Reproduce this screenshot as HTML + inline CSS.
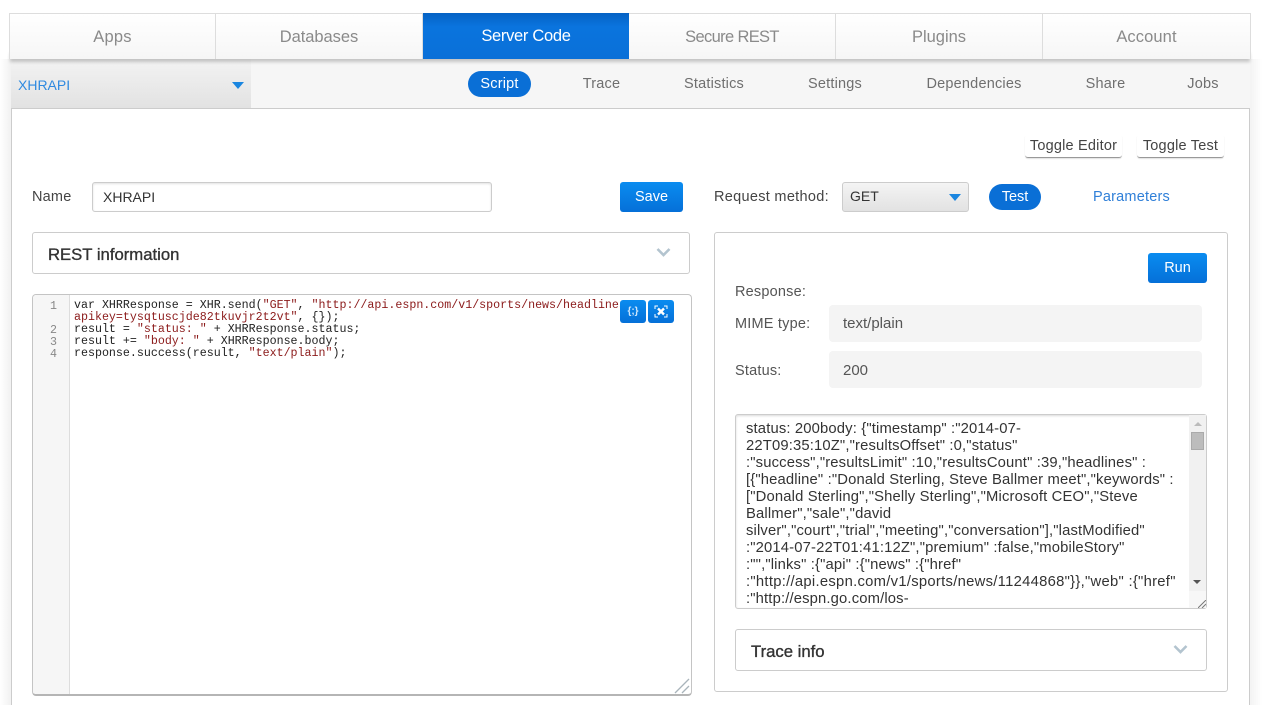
<!DOCTYPE html>
<html><head><meta charset="utf-8">
<style>
html,body{margin:0;padding:0;width:1262px;height:705px;overflow:hidden;background:#fff;font-family:"Liberation Sans",sans-serif;color:#444}
.a{position:absolute;box-sizing:border-box;white-space:pre}
.t{position:absolute;white-space:pre;line-height:20px;height:20px;transform:translateX(-50%)}
.l{position:absolute;white-space:pre;line-height:20px;height:20px}
.tab{position:absolute;top:13px;height:46px;line-height:46px;text-align:center;font-size:16.5px;color:#8a8a8a;background:linear-gradient(#fff,#f6f6f6);border-right:1px solid #ddd;box-sizing:border-box}
.btn{position:absolute;background:linear-gradient(#0a8cf0,#0570d8);color:#fff;border-radius:3px;text-align:center;font-size:14.5px}
.sub{color:#6f6f6f;font-size:14.5px;letter-spacing:.2px;top:74px}
.code{position:absolute;left:74px;font:11.65px/12px "Liberation Mono",monospace;color:#222;white-space:pre}
.code b{font-weight:normal;color:#8b1a1a}
.num{position:absolute;width:24px;left:33px;text-align:right;font:11.65px/12px "Liberation Mono",monospace;color:#888}
.r{position:absolute;left:746px;font-size:14.8px;line-height:17px;color:#333;white-space:pre;letter-spacing:.15px}
.box{position:absolute;background:#f4f4f4;border-radius:4px;left:829px;width:373px;height:37px;line-height:38px;padding-left:14px;box-sizing:border-box;font-size:15px;color:#555}
.lb{font-size:14.5px;letter-spacing:.2px;color:#555}
.tg{height:24px;line-height:24px;text-align:center;font-size:14.5px;color:#444;letter-spacing:.2px;border-bottom:1px solid #999;border-radius:3px;box-shadow:0 1px 1px rgba(0,0,0,.12)}
</style></head><body>
<!-- page frame -->
<div class="a" style="left:0;top:59px;width:11px;height:646px;background:linear-gradient(90deg,#fff,#f1f1f1)"></div>
<div class="a" style="left:1250px;top:59px;width:12px;height:646px;background:linear-gradient(90deg,#f3f3f3,#fff)"></div>
<div class="a" style="left:11px;top:59px;width:1239px;height:646px;background:#fff;border-left:1px solid #ccc;border-right:1px solid #ccc"></div>
<!-- sub nav -->
<div class="a" style="left:11px;top:59px;width:1239px;height:50px;background:#f6f6f6;border-bottom:1px solid #ccc"></div>
<div class="a" style="left:11px;top:59px;width:240px;height:49px;background:linear-gradient(#f3f3f3,#e2e2e2)"></div>
<div class="l" style="left:18px;top:75px;font-size:14px;color:#2f8ae0;">XHRAPI</div>
<div class="a" style="left:232px;top:82px;width:0;height:0;border-left:6px solid transparent;border-right:6px solid transparent;border-top:7px solid #1a86e0"></div>
<div class="a" style="left:468px;top:71px;width:63px;height:26px;border-radius:13px;background:#0a6fd6"></div>
<div class="t sub" style="left:499.5px;color:#fff">Script</div>
<div class="t sub" style="left:601.5px">Trace</div>
<div class="t sub" style="left:714px">Statistics</div>
<div class="t sub" style="left:835px">Settings</div>
<div class="t sub" style="left:974px">Dependencies</div>
<div class="t sub" style="left:1105.5px">Share</div>
<div class="t sub" style="left:1203px">Jobs</div>
<!-- top tabs -->
<div class="a" style="left:10px;top:50px;width:1240px;height:9px;box-shadow:0 3px 3px rgba(0,0,0,.2)"></div>
<div class="tab" style="left:9px;width:207px;border-left:1px solid #ddd;border-top:1px solid #ddd;letter-spacing:.2px">Apps</div>
<div class="tab" style="left:216px;width:207px;border-top:1px solid #ddd;letter-spacing:-.05px">Databases</div>
<div class="tab" style="left:423px;width:206px;color:#fff;background:linear-gradient(#0562c4,#0a74de 30%,#0a70d8);border-right:0;letter-spacing:-.3px">Server Code</div>
<div class="tab" style="left:629px;width:207px;border-top:1px solid #ddd;letter-spacing:-.65px">Secure REST</div>
<div class="tab" style="left:836px;width:207px;border-top:1px solid #ddd;letter-spacing:0">Plugins</div>
<div class="tab" style="left:1043px;width:208px;border-top:1px solid #ddd;border-right:1px solid #ddd;letter-spacing:.1px">Account</div>
<!-- toggles -->
<div class="a tg" style="left:1025px;top:134px;width:97px">Toggle Editor</div>
<div class="a tg" style="left:1137px;top:134px;width:87px">Toggle Test</div>
<!-- name row -->
<div class="l" style="left:32px;top:187px;font-size:14.5px;letter-spacing:.2px">Name</div>
<div class="a" style="left:92px;top:182px;width:400px;height:30px;border:1px solid #ccc;border-radius:3px;line-height:29px;padding-left:10px;font-size:14px;color:#333;box-shadow:inset 0 1px 2px rgba(0,0,0,.12)">XHRAPI</div>
<div class="btn" style="left:620px;top:182px;width:63px;height:30px;line-height:30px">Save</div>
<div class="l" style="left:714px;top:187px;font-size:14.5px;letter-spacing:.3px">Request method:</div>
<div class="a" style="left:842px;top:182px;width:127px;height:30px;border:1px solid #ccc;border-radius:3px;background:linear-gradient(#f4f4f4,#e2e2e2);line-height:27px;padding-left:7px;font-size:14px;color:#333">GET</div>
<div class="a" style="left:949px;top:194px;width:0;height:0;border-left:6px solid transparent;border-right:6px solid transparent;border-top:7px solid #1a86e0"></div>
<div class="a" style="left:989px;top:184px;width:52px;height:26px;border-radius:13px;background:#0a6fd6;color:#fff;text-align:center;line-height:26px;font-size:14.5px">Test</div>
<div class="l" style="left:1093px;top:187px;font-size:14.5px;color:#2f7fd8;letter-spacing:.2px">Parameters</div>
<!-- REST info -->
<div class="a" style="left:32px;top:232px;width:658px;height:42px;border:1px solid #ccc;border-radius:3px"></div>
<div class="l" style="left:48px;top:245px;font-size:16.7px;color:#333;-webkit-text-stroke:.35px #333">REST information</div>
<svg class="a" style="left:656px;top:247px" width="15" height="11" viewBox="0 0 15 11"><path d="M1.5 2 L7.5 8 L13.5 2" fill="none" stroke="#b3c4cf" stroke-width="2.6"/></svg>
<!-- editor -->
<div class="a" style="left:32px;top:294px;width:660px;height:402px;border:1px solid #c4c4c4;border-bottom:2px solid #b5b5b5;border-radius:4px;background:#fff"></div>
<div class="a" style="left:33px;top:295px;width:37px;height:399px;background:#f6f6f6;border-right:1px solid #ddd;border-radius:3px 0 0 3px"></div>
<div class="num" style="top:301px">1</div>
<div class="num" style="top:325px">2</div>
<div class="num" style="top:337px">3</div>
<div class="num" style="top:349px">4</div>
<div class="code" style="top:300px">var XHRResponse = XHR.send(<b>"GET"</b>, <b>"http://api.espn.com/v1/sports/news/headlines</b></div>
<div class="code" style="top:312px"><b>apikey=tysqtuscjde82tkuvjr2t2vt"</b>, {});</div>
<div class="code" style="top:324px">result = <b>"status: "</b> + XHRResponse.status;</div>
<div class="code" style="top:336px">result += <b>"body: "</b> + XHRResponse.body;</div>
<div class="code" style="top:348px">response.success(result, <b>"text/plain"</b>);</div>
<div class="btn" style="left:620px;top:300px;width:26px;height:23px;line-height:23px;font-size:10px;font-weight:bold;color:#cfe6fb">{;}</div>
<div class="btn" style="left:648px;top:300px;width:26px;height:23px"></div>
<svg class="a" style="left:654px;top:305px" width="14" height="13" viewBox="0 0 14 13"><path d="M1 4V1H4M10 1H13V4M13 9V12H10M4 12H1V9" fill="none" stroke="#fff" stroke-width="1"/><path d="M4 3.5L10 9.5M10 3.5L4 9.5" stroke="#fff" stroke-width="2.4"/></svg>
<svg class="a" style="left:674px;top:678px" width="16" height="16" viewBox="0 0 16 16"><path d="M1 15L15 1M8 15L15 8" stroke="#a9b4bb" stroke-width="1.3" fill="none"/></svg>
<!-- right panel -->
<div class="a" style="left:714px;top:232px;width:514px;height:460px;border:1px solid #ccc;border-radius:3px"></div>
<div class="btn" style="left:1148px;top:253px;width:59px;height:30px;line-height:30px">Run</div>
<div class="l lb" style="left:735px;top:282px">Response:</div>
<div class="l lb" style="left:735px;top:314px">MIME type:</div>
<div class="box" style="top:305px">text/plain</div>
<div class="l lb" style="left:735px;top:361px">Status:</div>
<div class="box" style="top:351px;line-height:40px">200</div>
<!-- response textarea -->
<div class="a" style="left:735px;top:414px;width:472px;height:195px;border:1px solid #ccc;border-radius:3px;box-shadow:inset 0 1px 2px rgba(0,0,0,.15);overflow:hidden;background:#fff"></div>
<div class="r" style="top:421px">status: 200body: {"timestamp" :"2014-07-</div>
<div class="r" style="top:438px">22T09:35:10Z","resultsOffset" :0,"status"</div>
<div class="r" style="top:455px">:"success","resultsLimit" :10,"resultsCount" :39,"headlines" :</div>
<div class="r" style="top:472px">[{"headline" :"Donald Sterling, Steve Ballmer meet","keywords" :</div>
<div class="r" style="top:489px">["Donald Sterling","Shelly Sterling","Microsoft CEO","Steve</div>
<div class="r" style="top:506px">Ballmer","sale","david</div>
<div class="r" style="top:523px">silver","court","trial","meeting","conversation"],"lastModified"</div>
<div class="r" style="top:540px">:"2014-07-22T01:41:12Z","premium" :false,"mobileStory"</div>
<div class="r" style="top:557px">:"","links" :{"api" :{"news" :{"href"</div>
<div class="r" style="top:574px;letter-spacing:.28px">:"http://api.espn.com/v1/sports/news/11244868"}},"web" :{"href"</div>
<div class="r" style="top:591px;height:16px;overflow:hidden">:"http://espn.go.com/los-</div>
<!-- scrollbar -->
<div class="a" style="left:1189px;top:415px;width:17px;height:176px;background:#f1f1f1"></div>
<div class="a" style="left:1189px;top:591px;width:17px;height:17px;background:#f7f7f7"></div>
<div class="a" style="left:1191px;top:432px;width:13px;height:18px;background:#bcbcbc;border:1px solid #aaa"></div>
<div class="a" style="left:1194px;top:422px;width:0;height:0;border-left:4px solid transparent;border-right:4px solid transparent;border-bottom:4px solid #bbb"></div>
<div class="a" style="left:1193px;top:580px;width:0;height:0;border-left:4px solid transparent;border-right:4px solid transparent;border-top:4px solid #555"></div>
<svg class="a" style="left:1198px;top:600px" width="8" height="8" viewBox="0 0 8 8"><path d="M0 8L8 0M4 8L8 4" stroke="#777" stroke-width="1" fill="none"/></svg>
<!-- trace info -->
<div class="a" style="left:735px;top:629px;width:472px;height:42px;border:1px solid #ccc;border-radius:3px"></div>
<div class="l" style="left:751px;top:642px;font-size:16.7px;color:#333;-webkit-text-stroke:.35px #333">Trace info</div>
<svg class="a" style="left:1173px;top:644px" width="15" height="11" viewBox="0 0 15 11"><path d="M1.5 2 L7.5 8 L13.5 2" fill="none" stroke="#b3c4cf" stroke-width="2.6"/></svg>
</body></html>
